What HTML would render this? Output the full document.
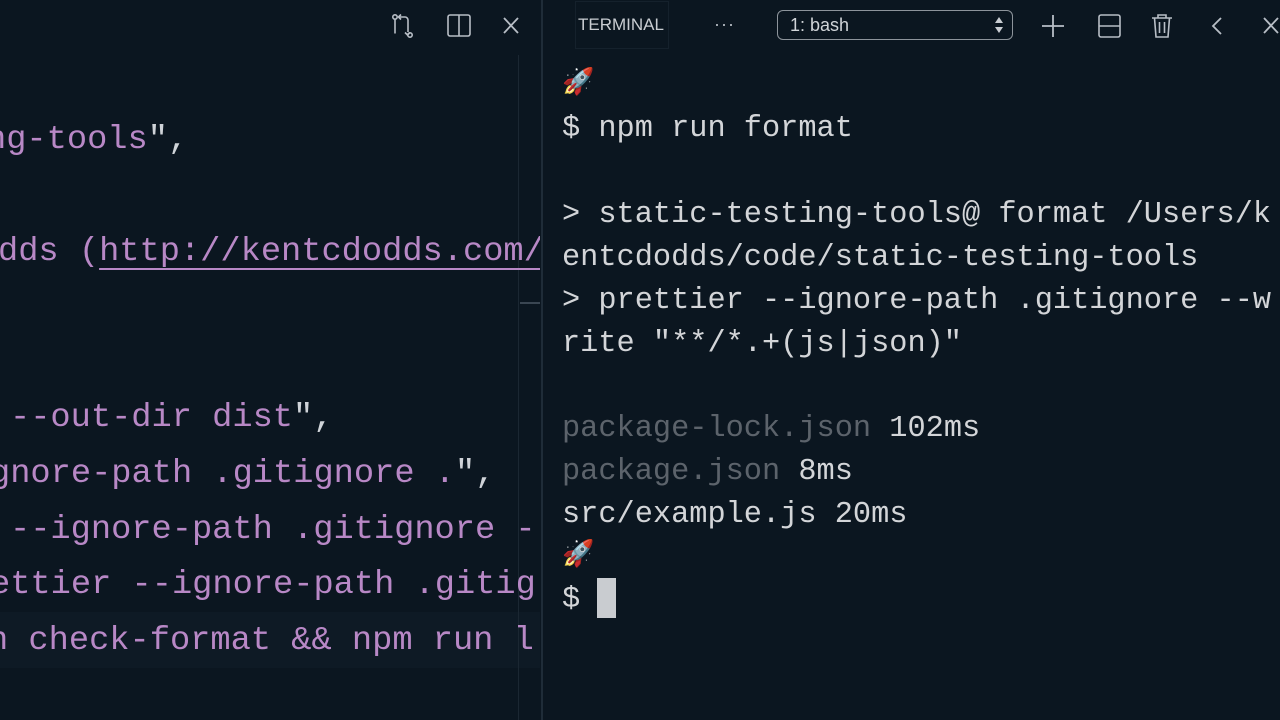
<!DOCTYPE html>
<html><head><meta charset="utf-8"><style>
html,body{margin:0;padding:0;width:1280px;height:720px;overflow:hidden;background:#0b1620;}
.mono{font-family:"Liberation Mono","DejaVu Sans Mono",monospace;}
#ed{position:absolute;left:0;top:0;width:540px;height:720px;overflow:hidden;}
.l{position:absolute;white-space:pre;font-size:33.7px;color:#b888c6;line-height:40px;}
.w{color:#cfd3d8;}
#term{position:absolute;left:543px;top:0;width:737px;height:720px;}
.t{position:absolute;left:19px;white-space:pre;font-size:30.3px;color:#d3d5d8;line-height:40px;}
.d{color:#5c636b;}
.ic{position:absolute;top:13px;}
</style></head><body>
<div id="ed" class="mono">
 <div style="position:absolute;left:0;top:612px;width:540px;height:56px;background:#0e1a25"></div>
 <div style="position:absolute;left:518px;top:55px;width:1px;height:665px;background:#1b2732"></div>
 <div style="position:absolute;left:520px;top:302px;width:20px;height:2px;background:#3a4652"></div>
 <div class="l" style="left:-14px;top:120px">ng-tools<span class="w">",</span></div>
 <div class="l" style="left:-2px;top:232px">dds (<span style="text-decoration:underline;text-underline-offset:8px;text-decoration-thickness:2px">http://kentcdodds.com/</span></div>
 <div class="l" style="left:10px;top:398px">--out-dir dist<span class="w">",</span></div>
 <div class="l" style="left:-10px;top:454px">gnore-path .gitignore .<span class="w">",</span></div>
 <div class="l" style="left:10px;top:510px">--ignore-path .gitignore -</div>
 <div class="l" style="left:-10px;top:565px">ettier --ignore-path .gitig</div>
 <div class="l" style="left:-12px;top:621px">n check-format &amp;&amp; npm run l</div>
</div>
<div style="position:absolute;left:541px;top:0;width:2px;height:720px;background:#1f2c38"></div>
<svg class="ic" style="left:390px" width="26" height="26" viewBox="0 0 26 26" fill="none" stroke="#b8bec6" stroke-width="1.6"><circle cx="5" cy="4" r="2.2"/><path d="M5 6.5v14M9 4h6a3 3 0 0 1 3 3v12"/><circle cx="20" cy="22" r="2.2"/><path d="M11 1.5L8.5 4l2.5 2.5M15 19.5l2.5 2.5 2.5-2.5"/></svg>
<svg class="ic" style="left:446px" width="26" height="26" viewBox="0 0 26 26" fill="none" stroke="#b8bec6" stroke-width="1.6"><rect x="2" y="2" width="22" height="21" rx="2"/><path d="M13 2v21"/></svg>
<svg class="ic" style="left:500px" width="22" height="26" viewBox="0 0 22 26" fill="none" stroke="#b8bec6" stroke-width="1.8"><path d="M4 5l14 15M18 5L4 20"/></svg>
<div style="position:absolute;left:575px;top:1px;width:94px;height:48px;border:1px solid #15212c;box-sizing:border-box"></div>
<div style="position:absolute;left:578px;top:15px;font-family:'Liberation Sans',sans-serif;font-size:17px;color:#c9cdd2">TERMINAL</div>
<div style="position:absolute;left:714px;top:14px;font-family:'Liberation Sans',sans-serif;font-size:18px;color:#b8bec6;letter-spacing:1px">···</div>
<div style="position:absolute;left:777px;top:10px;width:236px;height:30px;border:1.5px solid #8d949b;border-radius:6px;box-sizing:border-box"></div>
<div style="position:absolute;left:790px;top:15px;font-family:'Liberation Sans',sans-serif;font-size:18px;color:#d0d4d8">1: bash</div>
<svg style="position:absolute;left:994px;top:15px" width="10" height="20" viewBox="0 0 10 20" fill="#c9cdd2"><path d="M1 8L5 2l4 6zM1 12l4 6 4-6z"/></svg>
<svg class="ic" style="left:1040px" width="26" height="26" viewBox="0 0 26 26" stroke="#b8bec6" stroke-width="1.8"><path d="M13 2v22M2 13h22"/></svg>
<svg class="ic" style="left:1097px" width="26" height="26" viewBox="0 0 26 26" fill="none" stroke="#b8bec6" stroke-width="1.6"><rect x="2" y="2" width="21" height="22" rx="2"/><path d="M2 13h21"/></svg>
<svg class="ic" style="left:1150px" width="24" height="26" viewBox="0 0 24 26" fill="none" stroke="#b8bec6" stroke-width="1.6"><path d="M2 5h20M8 5V2h8v3M4.5 5l1.5 19h12l1.5-19M9.5 9v11M14.5 9v11"/></svg>
<svg class="ic" style="left:1208px" width="18" height="26" viewBox="0 0 18 26" fill="none" stroke="#b8bec6" stroke-width="1.8"><path d="M13 5L5 13l8 8"/></svg>
<svg class="ic" style="left:1260px" width="22" height="26" viewBox="0 0 22 26" fill="none" stroke="#b8bec6" stroke-width="1.8"><path d="M4 5l14 15M18 5L4 20"/></svg>
<div id="term" class="mono">
 <div class="t" style="top:62px;font-size:26px;font-family:'Noto Color Emoji','DejaVu Sans',sans-serif">🚀</div>
 <div class="t" style="top:109px">$ npm run format</div>
 <div class="t" style="top:195px">&gt; static-testing-tools@ format /Users/k</div>
 <div class="t" style="top:238px">entcdodds/code/static-testing-tools</div>
 <div class="t" style="top:281px">&gt; prettier --ignore-path .gitignore --w</div>
 <div class="t" style="top:324px">rite "**/*.+(js|json)"</div>
 <div class="t" style="top:409px"><span class="d">package-lock.json</span> 102ms</div>
 <div class="t" style="top:452px"><span class="d">package.json</span> 8ms</div>
 <div class="t" style="top:495px">src/example.js 20ms</div>
 <div class="t" style="top:534px;font-size:26px;font-family:'Noto Color Emoji','DejaVu Sans',sans-serif">🚀</div>
 <div class="t" style="top:580px">$</div>
 <div style="position:absolute;left:54px;top:578px;width:19px;height:40px;background:#c9ccd0"></div>
</div>
</body></html>
